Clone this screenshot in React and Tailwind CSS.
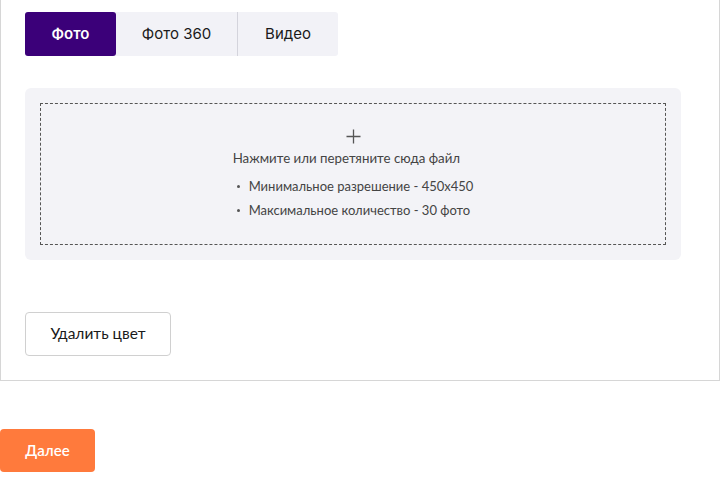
import React, { useState } from 'react';

const TABS = ['Фото', 'Фото 360', 'Видео'];

const PlusIcon = () => (
  <svg width="15" height="15" viewBox="0 0 15 15" fill="none">
    <path d="M7.5 0.5v14M0.5 7.5h14" stroke="#555" strokeWidth="1.3" />
  </svg>
);

const App = () => {
  const [tab, setTab] = useState(0);

  return (
    <div className="w-[721px] min-h-[501px] bg-white font-['Lato',_sans-serif]">
      <div className="w-[720px] border-x border-b border-[#d6d6d6] px-[24px] pt-[12px] pb-[24px]">
        {/* media type tabs */}
        <div className="flex w-[313px] h-[44px] rounded-[3px] bg-[#f2f2f7] font-['Inter',_sans-serif] text-[15px]">
          {TABS.map((t, i) => (
            <button
              key={t}
              onClick={() => setTab(i)}
              className={
                i === 0
                  ? (tab === i
                    ? 'w-[91px] rounded-[3px] bg-[#3b0079] text-white font-semibold'
                    : 'w-[91px] text-[#1a1a1a]')
                  : i === 1
                    ? (tab === i
                      ? 'w-[122px] rounded-[3px] bg-[#3b0079] text-white font-semibold border-r border-[#d4d4dc]'
                      : 'w-[122px] text-[#1a1a1a] border-r border-[#d4d4dc]')
                    : (tab === i
                      ? 'flex-1 rounded-[3px] bg-[#3b0079] text-white font-semibold'
                      : 'flex-1 text-[#1a1a1a]')
              }
            >
              {t}
            </button>
          ))}
        </div>

        {/* drop zone */}
        <div className="mt-[32px] w-[656px] rounded-[6px] bg-[#f3f3f7] p-[15px]">
          <div className="h-[142px] border border-dashed border-[#555] pt-[25px] flex flex-col items-center text-[#444]">
            <PlusIcon />
            <div className="flex flex-col items-start">
              <p className="mt-[6px] text-[13.3px] leading-[16px]">Нажмите или перетяните сюда файл</p>
              <ul className="mt-[8px] text-[13px] leading-[24px]">
                <li className="flex items-center pl-[4px]">
                  <span className="w-[3px] h-[3px] rounded-full bg-[#555] mr-[9px]" />
                  Минимальное разрешение - 450x450
                </li>
                <li className="flex items-center pl-[4px]">
                  <span className="w-[3px] h-[3px] rounded-full bg-[#555] mr-[9px]" />
                  Максимальное количество - 30 фото
                </li>
              </ul>
            </div>
          </div>
        </div>

        <button className="mt-[52px] block w-[146px] h-[44px] rounded-[4px] border border-[#d0d0d0] bg-white text-[15.5px] text-[#1a1a1a]">
          Удалить цвет
        </button>
      </div>

      <button className="mt-[48px] block w-[95px] h-[43px] rounded-[4px] bg-[#ff7a3c] text-white text-[15px] font-semibold">
        Далее
      </button>
    </div>
  );
};

export default App;
